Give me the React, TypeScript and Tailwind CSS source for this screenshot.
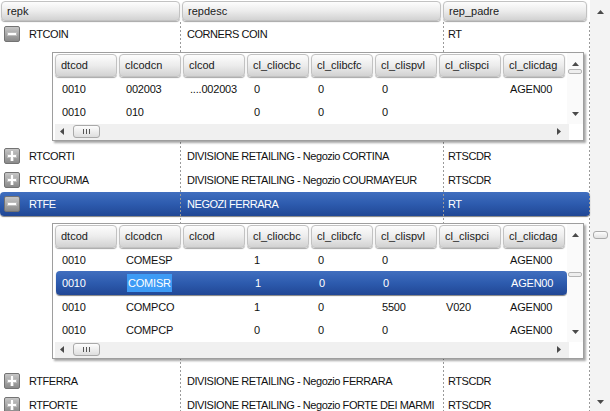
import React from "react";

const subCols = [
  "dtcod",
  "clcodcn",
  "clcod",
  "cl_cliocbc",
  "cl_clibcfc",
  "cl_clispvl",
  "cl_clispci",
  "cl_clicdag",
];

const sub1 = [
  ["0010", "002003", "....002003", "0", "0", "0", "", "AGEN00"],
  ["0010", "010", "", "0", "0", "0", "", ""],
];

const sub2 = [
  ["0010", "COMESP", "", "1", "0", "0", "", "AGEN00"],
  ["0010", "COMISR", "", "1", "0", "0", "", "AGEN00"],
  ["0010", "COMPCO", "", "1", "0", "5500", "V020", "AGEN00"],
  ["0010", "COMPCP", "", "0", "0", "0", "", "AGEN00"],
];

const selBg =
  "bg-linear-to-b from-[#416fbf] via-[#2d5bae] to-[#214795] shadow-[0_1px_1px_rgba(0,0,0,0.5)] text-white";

function Arrow({ dir }: { dir: "up" | "down" | "left" | "right" }) {
  const pts = {
    up: "0,4 7,4 3.5,0",
    down: "0,0 7,0 3.5,4",
    left: "4,0 4,7 0,3.5",
    right: "0,0 0,7 4,3.5",
  }[dir];
  const vert = dir === "up" || dir === "down";
  return (
    <svg width={vert ? 7 : 4} height={vert ? 4 : 7} viewBox={vert ? "0 0 7 4" : "0 0 4 7"}>
      <polygon points={pts} fill="#4a4a4a" />
    </svg>
  );
}

function Toggle({ open }: { open: boolean }) {
  return (
    <div className="relative w-[16px] h-[16px] shrink-0 rounded-[2px] border border-[#737373] bg-linear-to-b from-[#c6c6c6] to-[#8a8a8a] flex items-center justify-center">
      <div className="absolute w-[10px] h-[4px] bg-white border border-[#bdbdbd]" />
      {!open && <div className="absolute w-[4px] h-[10px] bg-white border-x border-[#bdbdbd]" />}
      {!open && <div className="absolute w-[8px] h-[2px] bg-white" />}
    </div>
  );
}

function HeadCell({ label, w }: { label: string; w: string }) {
  return (
    <div className={`${w} shrink-0 pr-[2px]`}>
      <div className="h-full rounded-[4px] border border-[#c2c2c2] bg-linear-to-b from-[#fdfdfd] via-[#ececec] to-[#d2d2d2] shadow-[0_1px_1px_rgba(0,0,0,0.35)] flex items-center pl-[5px] pt-[1px] text-[11px] text-[#1a1a1a]">
        {label}
      </div>
    </div>
  );
}

function Grip() {
  return (
    <div className="w-[27px] h-[13px] rounded-[3px] border border-[#a9a9a9] bg-linear-to-b from-[#fdfdfd] to-[#dedede] flex items-center justify-center gap-[2px]">
      <div className="w-px h-[5px] bg-[#555]" />
      <div className="w-px h-[5px] bg-[#555]" />
      <div className="w-px h-[5px] bg-[#555]" />
    </div>
  );
}

function SubGrid({
  rows,
  selected,
  thumbTop,
}: {
  rows: string[][];
  selected?: number;
  thumbTop: string;
}) {
  return (
    <div className="relative z-[2] ml-[52px] w-[532px] border border-[#9e9e9e] bg-white shadow-[2px_2px_2px_rgba(0,0,0,0.35)]">
      <div className="flex">
        <div className="w-[514px] pl-[2px] pt-[1px]">
          <div className="flex h-[23px]">
            {subCols.map((c) => (
              <HeadCell key={c} label={c} w="w-[64px]" />
            ))}
          </div>
          {rows.map((r, i) => (
            <div
              key={i}
              className={`flex h-[23.5px] items-center pt-[1px] text-[11px] tracking-[-0.2px] ${
                i === selected ? `${selBg} rounded-[4px] ml-[1px]` : "text-[#111]"
              }`}
            >
              {r.map((v, j) => (
                <div key={j} className={`w-[64px] shrink-0 ${i === selected && j === 0 ? "pl-[6px]" : "pl-[7px]"}`}>
                  {i === selected && j === 1 ? (
                    <span className="bg-[#3d9bf5] px-px py-[3px]">{v}</span>
                  ) : (
                    v
                  )}
                </div>
              ))}
            </div>
          ))}
        </div>
        <div className="w-[16px] flex flex-col items-center pt-[9px] pb-[8px] bg-[#fafafa]">
          <Arrow dir="up" />
          <div className={`${thumbTop} w-[14px] h-[5px] rounded-[2px] border border-[#b5b5b5] bg-[#eeeeee]`} />
          <div className="flex-1" />
          <Arrow dir="down" />
        </div>
      </div>
      <div className="flex h-[16px]">
        <div className="w-[514px] ml-[2px] flex items-center bg-[#f0f0f0] pl-[5px] pr-[8px]">
          <Arrow dir="left" />
          <div className="ml-[9px]">
            <Grip />
          </div>
          <div className="flex-1" />
          <Arrow dir="right" />
        </div>
        <div className="w-[14px] bg-white" />
      </div>
    </div>
  );
}

function MainRow({
  k,
  desc,
  padre,
  open,
  selected,
}: {
  k: string;
  desc: string;
  padre: string;
  open?: boolean;
  selected?: boolean;
}) {
  return (
    <div
      className={`flex h-[24px] items-center text-[11px] tracking-[-0.45px] ${
        selected ? `${selBg} rounded-[4px]` : "text-[#111]"
      }`}
    >
      <div className="w-[181px] shrink-0 flex items-center pl-[4px] gap-[9px]">
        <Toggle open={!!open} />
        <span className="pt-[1px]">{k}</span>
      </div>
      <div className="w-[262px] shrink-0 pl-[6px] pt-[1px]">{desc}</div>
      <div className="w-[147px] shrink-0 pl-[5px] pt-[1px]">{padre}</div>
    </div>
  );
}

const dots =
  "absolute top-0 bottom-0 w-px bg-[image:repeating-linear-gradient(to_bottom,#9a9a9a_0px,#9a9a9a_2px,transparent_2px,transparent_4px)] z-[1]";

export default function App() {
  return (
    <div className="w-[610px] h-[411px] overflow-hidden bg-white flex font-['Liberation_Sans',Arial,sans-serif]">
      <div className="w-[590px] flex flex-col">
        <div className="flex h-[24px] pt-[1px] pb-[1px] pl-[1px]">
          <HeadCell label="repk" w="w-[181px]" />
          <HeadCell label="repdesc" w="w-[261px]" />
          <HeadCell label="rep_padre" w="w-[146px]" />
        </div>
        <div className="relative flex-1">
          <div className={`${dots} left-[180px]`} />
          <div className={`${dots} left-[443px]`} />
          <div className={`${dots} left-[589px]`} />
          <MainRow k="RTCOIN" desc="CORNERS COIN" padre="RT" open />
          <div className="h-[98px] pt-[6px]">
            <SubGrid rows={sub1} thumbTop="mt-[3px]" />
          </div>
          <MainRow k="RTCORTI" desc="DIVISIONE RETAILING - Negozio CORTINA" padre="RTSCDR" />
          <MainRow k="RTCOURMA" desc="DIVISIONE RETAILING - Negozio COURMAYEUR" padre="RTSCDR" />
          <MainRow k="RTFE" desc="NEGOZI FERRARA" padre="RT" open selected />
          <div className="h-[153px] pt-[7px]">
            <SubGrid rows={sub2} selected={1} thumbTop="mt-[35px]" />
          </div>
          <MainRow k="RTFERRA" desc="DIVISIONE RETAILING - Negozio FERRARA" padre="RTSCDR" />
          <MainRow k="RTFORTE" desc="DIVISIONE RETAILING - Negozio FORTE DEI MARMI" padre="RTSCDR" />
        </div>
      </div>
      <div className="w-[20px] bg-[#f3f3f3] flex flex-col items-center pt-[10px] pb-[7px]">
        <Arrow dir="up" />
        <div className="mt-[217px] w-[15px] h-[8px] rounded-[3px] border border-[#a9a9a9] bg-linear-to-b from-[#fdfdfd] to-[#e2e2e2]" />
        <div className="flex-1" />
        <Arrow dir="down" />
      </div>
    </div>
  );
}
